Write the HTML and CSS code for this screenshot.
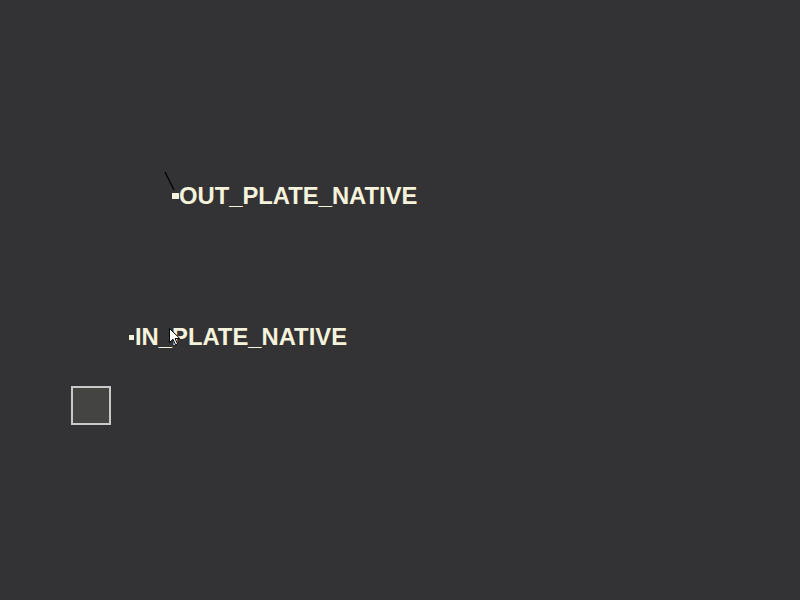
FILE: index.html
```html
<!DOCTYPE html>
<html>
<head>
<meta charset="utf-8">
<link rel="stylesheet" href="styles.css">
</head>
<body>
<div class="canvas">
  <svg class="wire" width="800" height="600" viewBox="0 0 800 600">
    <line x1="165" y1="172" x2="174" y2="190" stroke="#000" stroke-width="1.2"/>
  </svg>
  <div class="node node-out"><span class="pin pin-out"></span><span class="label">OUT_PLATE_NATIVE</span></div>
  <div class="node node-in"><span class="pin pin-in"></span><span class="label">IN_PLATE_NATIVE</span></div>
  <div class="box"></div>
  <svg class="cursor" width="13" height="19" viewBox="0 0 13 19">
    <path d="M0.5 0.5 L0.5 14.5 L4 11.2 L6.6 17 L8.6 16.1 L6.1 10.5 L10.8 10.5 Z" fill="#fff" stroke="#000" stroke-width="1"/>
  </svg>
</div>
</body>
</html>
```
FILE: styles.css
```css
html, body {
  margin: 0;
  padding: 0;
  background: #333234;
}
.canvas {
  position: relative;
  width: 800px;
  height: 600px;
  overflow: hidden;
  background: #333234;
  font-family: "Liberation Sans", Arial, sans-serif;
}
.wire {
  position: absolute;
  left: 0;
  top: 0;
}
.node {
  position: absolute;
  display: flex;
  align-items: center;
  color: #f6f3dc;
  font-weight: bold;
  font-size: 23.8px;
  line-height: 28px;
  white-space: nowrap;
}
.node-out { left: 172px; top: 182px; }
.node-in { left: 129px; top: 323px; }
.pin {
  display: block;
  background: #f6f3dc;
}
.pin-out { width: 7px; height: 6px; margin-right: 0; }
.pin-in { width: 5px; height: 5px; margin-right: 1px; }
.box {
  position: absolute;
  left: 71px;
  top: 386px;
  width: 36px;
  height: 35px;
  border: 2px solid #c9c9c7;
  background: #444442;
}
.cursor {
  position: absolute;
  left: 169px;
  top: 328px;
}
```
